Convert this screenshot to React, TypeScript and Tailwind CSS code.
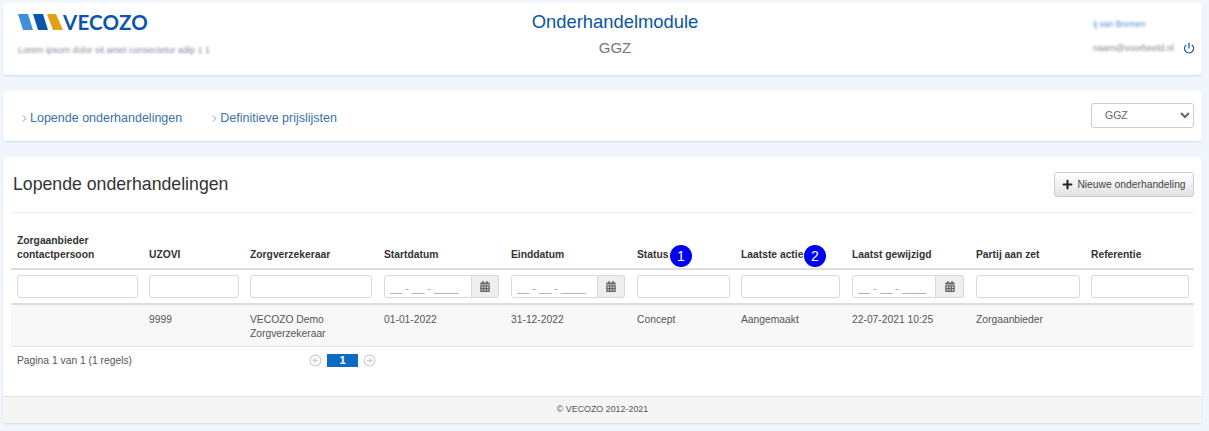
import React from "react";
import { Power, CircleArrowLeft, CircleArrowRight, ChevronRight } from "lucide-react";
import { FaCalendarAlt, FaPlus } from "react-icons/fa";

const widths = ["w-[132px]", "w-[101px]", "w-[134px]", "w-[127px]", "w-[126px]", "w-[104px]", "w-[111px]", "w-[124px]", "w-[115px]", "w-[109px]"];

function Badge({ n }: { n: string }) {
  return (
    <span className="inline-flex h-[22px] w-[22px] items-center justify-center rounded-full bg-[#0000f0] text-[14px] font-normal text-white">
      {n}
    </span>
  );
}

function TextFilter({ w }: { w: string }) {
  return <input className={`box-border block h-[23px] rounded-[3px] border border-[#d9d9d9] bg-white ${w}`} />;
}

function DateFilter({ w, input }: { w: string; input: string }) {
  return (
    <div className={`flex h-[23px] ${w}`}>
      <input
        placeholder="__ - __ - ____"
        className={`box-border h-full rounded-l-[3px] border border-[#d9d9d9] bg-white px-[5px] pt-[2px] text-[11px] placeholder:text-[#a0a0a0] ${input}`}
      />
      <div className="flex flex-1 items-center justify-center rounded-r-[3px] border border-l-0 border-[#d9d9d9] bg-[#eeeeee] text-[#666666]">
        <FaCalendarAlt className="h-[11px] w-[10px]" />
      </div>
    </div>
  );
}

function Blur({ className, text }: { className: string; text: string }) {
  return <span className={`block whitespace-nowrap blur-[1.1px] ${className}`}>{text}</span>;
}

export default function App() {
  return (
    <div className="h-[431px] overflow-hidden bg-[#f0f6fc] pl-[3px] pr-[7px] pt-[3px] font-['Liberation_Sans',Arial,sans-serif] text-[#555555]">
      {/* Header */}
      <div className="flex h-[72px] rounded-[3px] bg-white shadow-[0_1px_2px_rgba(120,150,180,0.25)]">
        <div className="w-[134px] whitespace-nowrap pl-[15px] pt-[11px]">
          <div className="flex h-[16px] items-center">
            <svg width="45" height="16" viewBox="0 0 45 16" className="shrink-0">
              <polygon points="0,0 10,0 15,16 5,16" fill="#3f8fdb" />
              <polygon points="15,0 25,0 30,16 20,16" fill="#0b55ad" />
              <polygon points="29,0 38,0 45,16 35,16" fill="#e2a112" />
            </svg>
            <span className="font-['Lato',sans-serif] text-[20.5px] font-bold leading-none tracking-[0.2px] text-[#0b55ad]">VECOZO</span>
          </div>
          <Blur className="mt-[15px] text-[9px] leading-[10px] text-[#7d889c]" text="Lorem ipsum dolor sit amet consectetur adip 1 1" />
        </div>
        <div className="flex-1 pt-[8px] text-center">
          <div className="text-[18.4px] leading-[22px] text-[#0b55a0]">Onderhandelmodule</div>
          <div className="mt-[4px] text-[15px] leading-[22px] text-[#777777]">GGZ</div>
        </div>
        <div className="w-[109px] pt-[16px]">
          <Blur className="text-[8.5px] leading-[10px] text-[#4f8ed6]" text="Ij van Bremen" />
          <div className="mt-[13px] flex items-center">
            <Blur className="w-[80px] text-[9px] leading-[10px] text-[#858585]" text="naam@voorbeeld.nl" />
            <Power className="ml-[10px] h-[12px] w-[12px] text-[#0b55a0]" strokeWidth={2.5} />
          </div>
        </div>
      </div>

      {/* Nav */}
      <div className="mt-[16px] flex h-[50px] items-center justify-between rounded-[3px] bg-white pl-[16px] pr-[8px] shadow-[0_1px_2px_rgba(120,150,180,0.25)]">
        <div className="flex gap-[27px] pt-[5px] text-[12.5px] text-[#3b72a8]">
          <a className="flex items-center"><ChevronRight className="h-[11px] w-[11px]" strokeWidth={1.5} />Lopende onderhandelingen</a>
          <a className="flex items-center"><ChevronRight className="h-[11px] w-[11px]" strokeWidth={1.5} />Definitieve prijslijsten</a>
        </div>
        <select className="mb-[2px] box-border h-[25px] w-[103px] rounded-[3px] border border-[#cccccc] bg-white pl-[9px] text-[10.5px] text-[#666666]">
          <option>GGZ</option>
        </select>
      </div>

      {/* Main */}
      <div className="mt-[16px] h-[266px] overflow-hidden rounded-[3px] bg-white shadow-[0_1px_2px_rgba(120,150,180,0.25)]">
        <div className="mx-[8px] flex h-[56px] items-center justify-between border-b border-[#eeeeee]">
          <h1 className="pl-[2px] text-[17.7px] text-[#333333]">Lopende onderhandelingen</h1>
          <button className="flex h-[25px] w-[140px] items-center justify-center gap-[4px] rounded-[3px] border border-[#cccccc] bg-gradient-to-b from-[#ffffff] to-[#e2e2e2] text-[10.3px] text-[#444444]">
            <FaPlus className="h-[11px] w-[11px] text-[#222222]" />
            Nieuwe onderhandeling
          </button>
        </div>

        <table className="ml-[8px] w-[1183px] table-fixed border-collapse text-[10.3px]">
          <colgroup>
            {widths.map((w) => <col key={w} className={w} />)}
          </colgroup>
          <thead>
            <tr className="h-[56px] border-b-2 border-[#dddddd] text-left align-bottom text-[10.3px] font-bold leading-[14px] text-[#333333]">
              <th className="px-[6px] pb-[6px] font-bold">Zorgaanbieder contactpersoon</th>
              <th className="px-[6px] pb-[6px] font-bold">UZOVI</th>
              <th className="px-[6px] pb-[6px] font-bold">Zorgverzekeraar</th>
              <th className="px-[6px] pb-[6px] font-bold">Startdatum</th>
              <th className="px-[6px] pb-[6px] font-bold">Einddatum</th>
              <th className="relative px-[6px] pb-[6px] font-bold">
                Status
                <span className="absolute left-[39px] top-[32px]"><Badge n="1" /></span>
              </th>
              <th className="relative px-[6px] pb-[6px] font-bold">
                Laatste actie
                <span className="absolute left-[69px] top-[32px]"><Badge n="2" /></span>
              </th>
              <th className="px-[6px] pb-[6px] font-bold">Laatst gewijzigd</th>
              <th className="px-[6px] pb-[6px] font-bold">Partij aan zet</th>
              <th className="px-[6px] pb-[6px] font-bold">Referentie</th>
            </tr>
          </thead>
          <tbody>
            <tr className="h-[35px] border-b-2 border-[#dddddd]">
              <td className="px-[6px]"><TextFilter w="w-[121px]" /></td>
              <td className="px-[6px]"><TextFilter w="w-[90px]" /></td>
              <td className="px-[6px]"><TextFilter w="w-[122px]" /></td>
              <td className="px-[6px]"><DateFilter w="w-[115px]" input="w-[88px]" /></td>
              <td className="px-[6px]"><DateFilter w="w-[114px]" input="w-[87px]" /></td>
              <td className="px-[6px]"><TextFilter w="w-[93px]" /></td>
              <td className="px-[6px]"><TextFilter w="w-[99px]" /></td>
              <td className="px-[6px]"><DateFilter w="w-[112px]" input="w-[84px]" /></td>
              <td className="px-[6px]"><TextFilter w="w-[104px]" /></td>
              <td className="px-[6px]"><TextFilter w="w-[98px]" /></td>
            </tr>
            <tr className="h-[42px] border-b border-[#e4e4e4] bg-[#f8f8f8] align-top leading-[14px] text-[#555555]">
              <td className="px-[6px] pt-[8px]"></td>
              <td className="px-[6px] pt-[8px]">9999</td>
              <td className="px-[6px] pt-[8px]">VECOZO Demo Zorgverzekeraar</td>
              <td className="px-[6px] pt-[8px]">01-01-2022</td>
              <td className="px-[6px] pt-[8px]">31-12-2022</td>
              <td className="px-[6px] pt-[8px]">Concept</td>
              <td className="px-[6px] pt-[8px]">Aangemaakt</td>
              <td className="px-[6px] pt-[8px]">22-07-2021 10:25</td>
              <td className="px-[6px] pt-[8px]">Zorgaanbieder</td>
              <td className="px-[6px] pt-[8px]"></td>
            </tr>
          </tbody>
        </table>

        <div className="ml-[14px] mt-[7px] flex h-[14px] items-center text-[10.3px] text-[#555555]">
          <span className="w-[292px]">Pagina 1 van 1 (1 regels)</span>
          <CircleArrowLeft className="h-[13px] w-[13px] text-[#cccccc]" />
          <span className="mx-[5px] flex h-[13px] w-[31px] items-center justify-center bg-[#0b6bc4] text-[11px] font-bold text-white">1</span>
          <CircleArrowRight className="h-[13px] w-[13px] text-[#cccccc]" />
        </div>

        <div className="mt-[28px] flex h-[28px] items-center justify-center border-t border-[#e3e3e3] bg-[#f5f5f5] text-[8.9px] text-[#555555]">
          © VECOZO 2012-2021
        </div>
      </div>
    </div>
  );
}
